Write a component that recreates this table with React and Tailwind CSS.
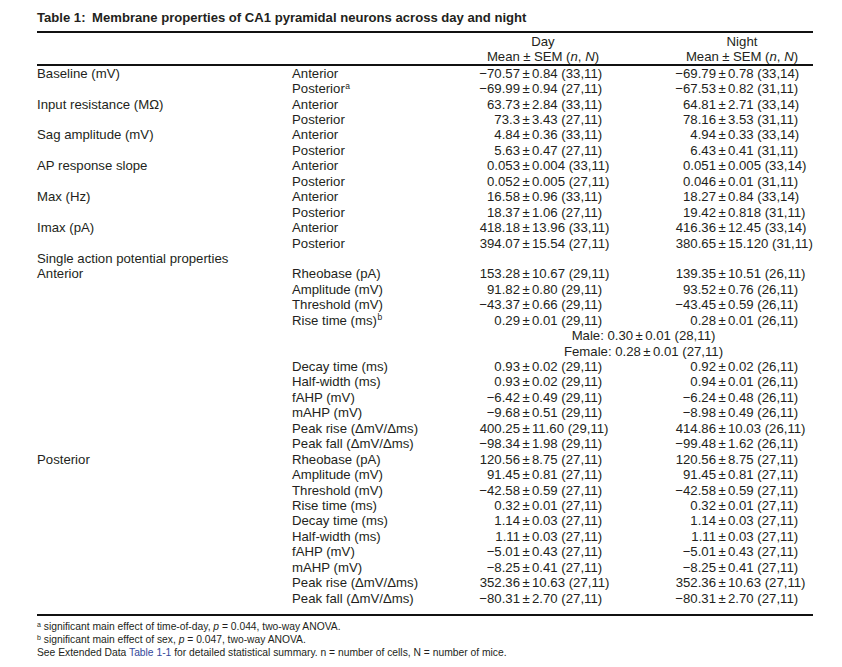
import React from 'react';

const rows = [
  ['Baseline (mV)', 'Anterior', '−70.57 ± 0.84 (33,11)', '−69.79 ± 0.78 (33,14)'],
  ['', 'Posterior|a', '−69.99 ± 0.94 (27,11)', '−67.53 ± 0.82 (31,11)'],
  ['Input resistance (MΩ)', 'Anterior', '63.73 ± 2.84 (33,11)', '64.81 ± 2.71 (33,14)'],
  ['', 'Posterior', '73.3 ± 3.43 (27,11)', '78.16 ± 3.53 (31,11)'],
  ['Sag amplitude (mV)', 'Anterior', '4.84 ± 0.36 (33,11)', '4.94 ± 0.33 (33,14)'],
  ['', 'Posterior', '5.63 ± 0.47 (27,11)', '6.43 ± 0.41 (31,11)'],
  ['AP response slope', 'Anterior', '0.053 ± 0.004 (33,11)', '0.051 ± 0.005 (33,14)'],
  ['', 'Posterior', '0.052 ± 0.005 (27,11)', '0.046 ± 0.01 (31,11)'],
  ['Max (Hz)', 'Anterior', '16.58 ± 0.96 (33,11)', '18.27 ± 0.84 (33,14)'],
  ['', 'Posterior', '18.37 ± 1.06 (27,11)', '19.42 ± 0.818 (31,11)'],
  ['Imax (pA)', 'Anterior', '418.18 ± 13.96 (33,11)', '416.36 ± 12.45 (33,14)'],
  ['', 'Posterior', '394.07 ± 15.54 (27,11)', '380.65 ± 15.120 (31,11)'],
  ['Single action potential properties'],
  ['Anterior', 'Rheobase (pA)', '153.28 ± 10.67 (29,11)', '139.35 ± 10.51 (26,11)'],
  ['', 'Amplitude (mV)', '91.82 ± 0.80 (29,11)', '93.52 ± 0.76 (26,11)'],
  ['', 'Threshold (mV)', '−43.37 ± 0.66 (29,11)', '−43.45 ± 0.59 (26,11)'],
  ['', 'Rise time (ms)|b', '0.29 ± 0.01 (29,11)', '0.28 ± 0.01 (26,11)'],
  ['*', 'Male: 0.30', '0.01 (28,11)'],
  ['*', 'Female: 0.28', '0.01 (27,11)'],
  ['', 'Decay time (ms)', '0.93 ± 0.02 (29,11)', '0.92 ± 0.02 (26,11)'],
  ['', 'Half-width (ms)', '0.93 ± 0.02 (29,11)', '0.94 ± 0.01 (26,11)'],
  ['', 'fAHP (mV)', '−6.42 ± 0.49 (29,11)', '−6.24 ± 0.48 (26,11)'],
  ['', 'mAHP (mV)', '−9.68 ± 0.51 (29,11)', '−8.98 ± 0.49 (26,11)'],
  ['', 'Peak rise (ΔmV/Δms)', '400.25 ± 11.60 (29,11)', '414.86 ± 10.03 (26,11)'],
  ['', 'Peak fall (ΔmV/Δms)', '−98.34 ± 1.98 (29,11)', '−99.48 ± 1.62 (26,11)'],
  ['Posterior', 'Rheobase (pA)', '120.56 ± 8.75 (27,11)', '120.56 ± 8.75 (27,11)'],
  ['', 'Amplitude (mV)', '91.45 ± 0.81 (27,11)', '91.45 ± 0.81 (27,11)'],
  ['', 'Threshold (mV)', '−42.58 ± 0.59 (27,11)', '−42.58 ± 0.59 (27,11)'],
  ['', 'Rise time (ms)', '0.32 ± 0.01 (27,11)', '0.32 ± 0.01 (27,11)'],
  ['', 'Decay time (ms)', '1.14 ± 0.03 (27,11)', '1.14 ± 0.03 (27,11)'],
  ['', 'Half-width (ms)', '1.11 ± 0.03 (27,11)', '1.11 ± 0.03 (27,11)'],
  ['', 'fAHP (mV)', '−5.01 ± 0.43 (27,11)', '−5.01 ± 0.43 (27,11)'],
  ['', 'mAHP (mV)', '−8.25 ± 0.41 (27,11)', '−8.25 ± 0.41 (27,11)'],
  ['', 'Peak rise (ΔmV/Δms)', '352.36 ± 10.63 (27,11)', '352.36 ± 10.63 (27,11)'],
  ['', 'Peak fall (ΔmV/Δms)', '−80.31 ± 2.70 (27,11)', '−80.31 ± 2.70 (27,11)'],
];

// "Posterior|a" -> Posterior with superscript a
const Label = ({ text }) => {
  const [main, sup] = text.split('|');
  return (
    <>
      {main}
      {sup && <sup className="text-[8.5px] ml-[0.5px]">{sup}</sup>}
    </>
  );
};

const Pm = () => <span className="inline-block w-[12px] text-center">±</span>;

// value split on the ± so the columns line up on the sign
const Value = ({ text, leftW, restW }) => {
  const [left, right] = text.split(' ± ');
  return (
    <>
      <span className={`${leftW} text-right shrink-0`}>{left}</span>
      <span className="w-[12px] text-center shrink-0">±</span>
      <span className={`${restW} shrink-0 whitespace-nowrap`}>{right}</span>
    </>
  );
};

const Row = ({ row }) => {
  if (row[0] === '*') {
    return (
      <div className="flex h-[15.44px] items-center">
        <div className="ml-[438px] w-[337px] text-center whitespace-nowrap">
          {row[1]}
          <Pm />
          {row[2]}
        </div>
      </div>
    );
  }
  return (
    <div className="flex h-[15.44px] items-center whitespace-nowrap">
      <div className={row.length === 1 ? 'w-[405px]' : 'w-[255px] shrink-0'}>{row[0]}</div>
      {row.length > 1 && (
        <>
          <div className="w-[150px] shrink-0">
            <Label text={row[1]} />
          </div>
          <Value text={row[2]} leftW="w-[78px]" restW="w-[104px]" />
          <Value text={row[3]} leftW="w-[80px]" restW="flex-1" />
        </>
      )}
    </div>
  );
};

const ColHead = ({ title }) => (
  <>
    <div>{title}</div>
    <div>
      Mean
      <span className="inline-block w-[14px] text-center">±</span>
      SEM (<i>n</i>, <i>N</i>)
    </div>
  </>
);

export default function App() {
  return (
    <div className="w-[842px] h-[667px] bg-white text-[#231f20] font-['Liberation_Sans',Arial,sans-serif] overflow-hidden">
      <div className="ml-[37px] w-[776px] pt-[10px]">
        <h1 className="text-[13.1px] leading-[16px] font-bold whitespace-nowrap">
          Table 1:{'\u2002'}Membrane properties of CA1 pyramidal neurons across day and night
        </h1>
        <div className="mt-[4.5px] h-[2px] bg-[#111]" />

        {/* header */}
        <div className="flex pt-[1px] text-[13.2px] leading-[15px]">
          <div className="w-[405px] shrink-0" />
          <div className="w-[202px] shrink-0 text-center">
            <ColHead title="Day" />
          </div>
          <div className="w-[28px] shrink-0" />
          <div className="w-[140px] shrink-0 text-center">
            <ColHead title="Night" />
          </div>
        </div>
        <div className="mt-[0.5px] h-[1.5px] bg-[#111]" />

        <div className="text-[13.2px] leading-[15px]">
          {rows.map((r, i) => (
            <Row key={i} row={r} />
          ))}
        </div>

        <div className="mt-[8.5px] h-[2px] bg-[#111]" />

        <div className="pt-[4px] text-[10.3px] leading-[13px] whitespace-nowrap">
          <div>
            <sup className="text-[7px]">a</sup> significant main effect of time-of-day, <i>p</i> = 0.044, two-way ANOVA.
          </div>
          <div>
            <sup className="text-[7px]">b</sup> significant main effect of sex, <i>p</i> = 0.047, two-way ANOVA.
          </div>
          <div>
            See Extended Data <span className="text-[#34499a]">Table 1-1</span> for detailed statistical summary. n = number of cells, N = number of mice.
          </div>
        </div>
      </div>
    </div>
  );
}
